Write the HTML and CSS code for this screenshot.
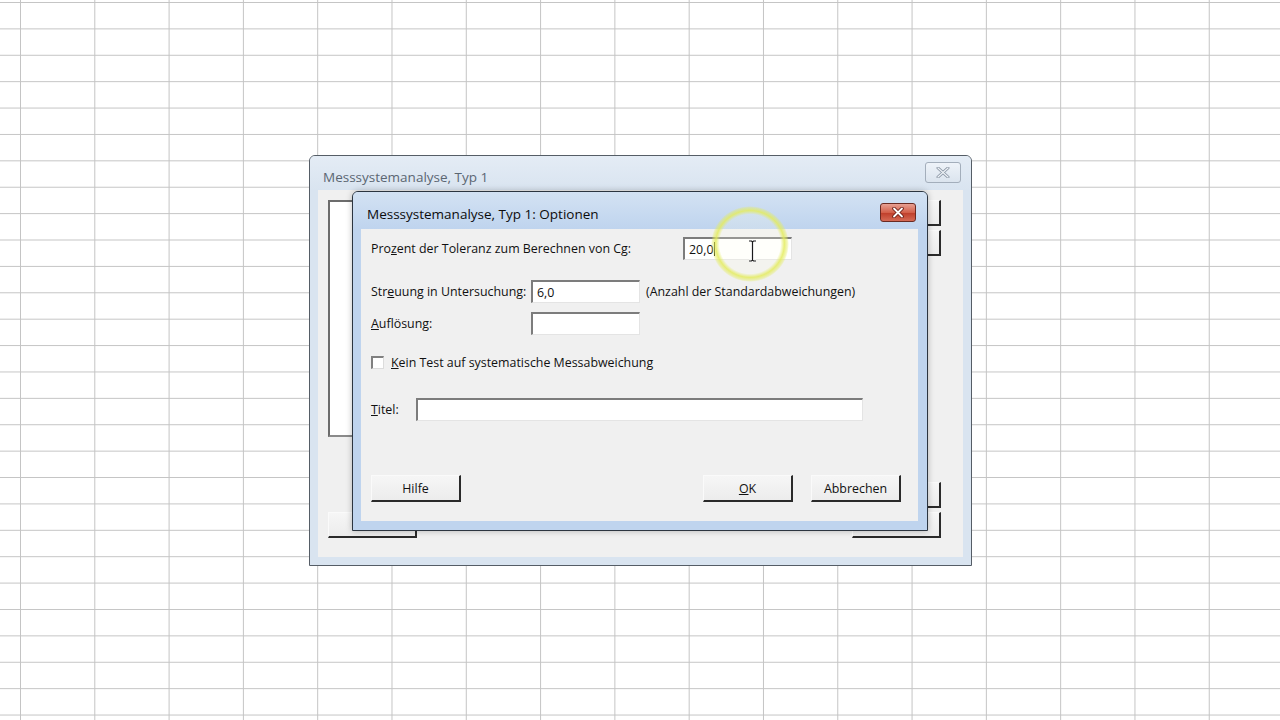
FILE: index.html
```html
<!DOCTYPE html>
<html lang="de">
<head>
    <meta charset="UTF-8">
    <meta name="viewport" content="width=device-width, initial-scale=1.0">
    <title>Messsystemanalyse, Typ 1: Optionen</title>
    <link rel="stylesheet" href="styles.css">
</head>
<body>

<!-- Main dialog (inactive, behind) -->
<div class="window outer-win">
    <div class="titlebar">
        <span class="title">Messsystemanalyse, Typ 1</span>
        <span class="close-btn inactive">
            <svg width="14" height="11" viewBox="0 0 14 11"><path d="M2 1 L12 10 M12 1 L2 10" stroke="#8a96a4" stroke-width="3" stroke-linecap="round"/><path d="M2 1 L12 10 M12 1 L2 10" stroke="#eef2f7" stroke-width="1.2" stroke-linecap="round"/></svg>
        </span>
    </div>
    <div class="client outer-client">
        <div class="outer-top">
            <div class="listbox"></div>
            <div class="btn-stack">
                <button class="btn wide"></button>
                <button class="btn wide"></button>
            </div>
        </div>
        <div class="outer-bottom">
            <button class="btn wide"></button>
            <div class="btn-stack">
                <button class="btn wide"></button>
                <button class="btn wide"></button>
            </div>
        </div>
    </div>
</div>

<!-- Options dialog (active) -->
<div class="window inner-win">
    <div class="titlebar">
        <span class="title">Messsystemanalyse, Typ 1: Optionen</span>
        <span class="close-btn active">
            <svg width="16" height="11" viewBox="0 0 16 11"><path d="M4 1.5 L12 9.5 M12 1.5 L4 9.5" stroke="#6b1d14" stroke-width="3.6" stroke-linecap="round"/><path d="M4 1.5 L12 9.5 M12 1.5 L4 9.5" stroke="#ffffff" stroke-width="1.8" stroke-linecap="round"/></svg>
        </span>
    </div>
    <div class="client inner-client">
        <div class="row row-cg">
            <label class="lbl lbl-cg">Pro<u>z</u>ent der Toleranz zum Berechnen von Cg:</label>
            <div class="field f-small">20,0<span class="caret"></span></div>
        </div>
        <div class="row row-spread">
            <label class="lbl lbl-mid">Str<u>e</u>uung in Untersuchung:</label>
            <div class="field f-small">6,0</div>
            <span class="note">(Anzahl der Standardabweichungen)</span>
        </div>
        <div class="row row-res">
            <label class="lbl lbl-mid"><u>A</u>uflösung:</label>
            <div class="field f-small"></div>
        </div>
        <div class="row row-check">
            <span class="checkbox"></span>
            <label class="lbl"><u>K</u>ein Test auf systematische Messabweichung</label>
        </div>
        <div class="row row-title">
            <label class="lbl lbl-title"><u>T</u>itel:</label>
            <div class="field f-title"></div>
        </div>
        <div class="row row-buttons">
            <button class="btn">Hilfe</button>
            <div class="btn-group">
                <button class="btn"><u>O</u>K</button>
                <button class="btn">Abbrechen</button>
            </div>
        </div>
    </div>
</div>

<!-- Screen recorder highlight + mouse cursor -->
<div class="click-ring"></div>
<svg class="ibeam" width="9" height="22" viewBox="0 0 9 22">
    <path d="M1 1 H3.5 L4.5 2 L5.5 1 H8 M4.5 2 V20 M1 21 H3.5 L4.5 20 L5.5 21 H8" stroke="#ffffff" stroke-width="3" fill="none"/>
    <path d="M1 1 H3.5 L4.5 2 L5.5 1 H8 M4.5 2 V20 M1 21 H3.5 L4.5 20 L5.5 21 H8" stroke="#1a1a1a" stroke-width="1.2" fill="none"/>
</svg>

</body>
</html>
```

FILE: styles.css
```css
body {
    margin: 0;
    width: 1280px;
    height: 720px;
    overflow: hidden;
    position: relative;
    font-family: "Open Sans", "Noto Sans", sans-serif;
    font-size: 12.4px;
    color: #111;
    background-color: #ffffff;
    background-image:
        linear-gradient(to right, #c4c4c4 1px, transparent 1px),
        linear-gradient(to bottom, #c4c4c4 1px, transparent 1px);
    background-size: 74.3px 26.4px;
    background-position: 20px 2px;
}
button {
    font-family: inherit;
    font-size: 12.4px;
    color: #111;
}

/* windows */
.window {
    position: absolute;
    box-sizing: border-box;
    display: flex;
    flex-direction: column;
    border: 1px solid #555d66;
    border-radius: 6px 6px 0 0;
}
.outer-win {
    left: 309px;
    top: 155px;
    width: 663px;
    height: 411px;
    background: #d9e4f0;
    padding: 0 8px 8px 8px;
}
.inner-win {
    left: 352px;
    top: 191px;
    width: 576px;
    height: 340px;
    background: #bfd4ee;
    border-color: #2c3540;
    padding: 0 9px 9px 8px;
    box-shadow: 0 0 6px rgba(0, 0, 0, 0.25);
}
.titlebar {
    display: flex;
    align-items: center;
    justify-content: space-between;
}
.outer-win .titlebar {
    height: 34px;
    margin: 0 -8px;
    padding-left: 13px;
    padding-right: 10px;
    background: linear-gradient(#e4ecf5, #d9e4f0);
    border-radius: 5px 5px 0 0;
}
.inner-win .titlebar {
    height: 37px;
    margin: 0 -9px 0 -8px;
    padding-left: 14px;
    padding-right: 11px;
    background: linear-gradient(#d3e2f3, #bfd4ee);
    border-radius: 5px 5px 0 0;
}
.title {
    font-size: 13.5px;
}
.outer-win .title {
    color: #5b6672;
    margin-top: 8px;
}
.inner-win .title {
    color: #0c0c0c;
    margin-top: 7px;
}
.close-btn {
    display: flex;
    align-items: center;
    justify-content: center;
    box-sizing: border-box;
}
.close-btn.inactive {
    width: 36px;
    height: 21px;
    border: 1px solid #a3aebb;
    border-radius: 3px;
    background: linear-gradient(#eef3f9, #dbe4ee);
    margin-top: -2px;
}
.close-btn.active {
    width: 36px;
    height: 19px;
    border: 1px solid #6a2a22;
    border-radius: 3px;
    background: linear-gradient(#e8a093, #d3604a 50%, #c0402c 55%, #d56a55);
    margin-top: 4px;
}
.client {
    flex: 1;
    background: #f0f0f0;
}

/* outer dialog content (mostly hidden) */
.outer-client {
    display: flex;
    flex-direction: column;
    justify-content: space-between;
    padding: 10px 22px 19px 10px;
}
.outer-top, .outer-bottom {
    display: flex;
    justify-content: space-between;
    align-items: flex-end;
}
.outer-top {
    align-items: flex-start;
}
.listbox {
    width: 120px;
    height: 233px;
    background: #fff;
    border-top: 2px solid #6c6c6c;
    border-left: 2px solid #6c6c6c;
    border-bottom: 2px solid #8a8a8a;
}
.btn-stack {
    display: flex;
    flex-direction: column;
    gap: 4px;
}

/* option rows */
.inner-client {
    padding: 8px 17px 19px 10px;
    display: flex;
    flex-direction: column;
}
.row {
    display: flex;
    align-items: center;
}
.lbl-cg {
    width: 312px;
}
.lbl-mid {
    width: 160px;
}
.lbl-title {
    width: 45px;
}
.row-spread {
    margin-top: 20px;
}
.row-res {
    margin-top: 9px;
}
.row-check {
    margin-top: 19px;
}
.row-title {
    margin-top: 27px;
}
.row-buttons {
    margin-top: auto;
    justify-content: space-between;
    align-items: flex-end;
}
.btn-group {
    display: flex;
    gap: 18px;
}
.field {
    box-sizing: border-box;
    height: 23px;
    background: #fff;
    border-top: 2px solid #7c7c7c;
    border-left: 2px solid #7c7c7c;
    border-right: 1px solid #e4e4e4;
    border-bottom: 1px solid #e4e4e4;
    padding: 2px 4px;
    line-height: 17px;
    display: flex;
    align-items: center;
}
.f-small {
    width: 109px;
}
.f-title {
    width: 447px;
}
.caret {
    display: inline-block;
    width: 1px;
    height: 14px;
    background: #000;
    margin-left: 1px;
}
.note {
    margin-left: 6px;
}
.checkbox {
    box-sizing: border-box;
    width: 13px;
    height: 13px;
    background: #fff;
    border-top: 2px solid #808080;
    border-left: 2px solid #808080;
    border-right: 1px solid #dcdcdc;
    border-bottom: 1px solid #dcdcdc;
    margin-right: 7px;
}
.btn {
    box-sizing: border-box;
    width: 90px;
    height: 27px;
    padding: 0;
    background: linear-gradient(#f6f6f6, #ececec);
    border-top: 1px solid #fafafa;
    border-left: 1px solid #fafafa;
    border-right: 2px solid #2a2a2a;
    border-bottom: 2px solid #2a2a2a;
}
.outer-client .btn {
    height: 26px;
    width: 89px;
}

/* recorder overlay */
.click-ring {
    position: absolute;
    left: 711px;
    top: 206px;
    width: 78px;
    height: 76px;
    border-radius: 50%;
    background: radial-gradient(closest-side, rgba(255, 255, 235, 0.2) 78%, rgba(228, 236, 95, 0.85) 88%, rgba(228, 236, 95, 0.4) 96%, transparent 100%);
}
.ibeam {
    position: absolute;
    left: 748px;
    top: 240px;
}
```
